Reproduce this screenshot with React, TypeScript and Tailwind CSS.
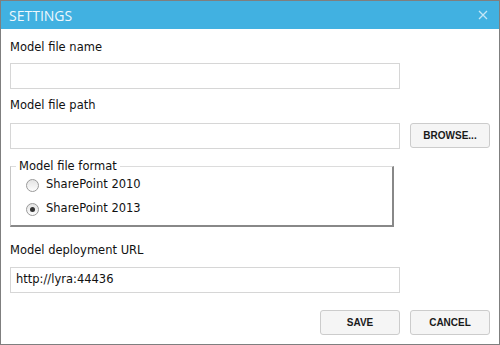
import React from 'react'

const font = { fontFamily: '"DejaVu Sans", Tahoma, sans-serif' }

function Field({ value = '' }: { value?: string }) {
  return (
    <div className="w-[390px] h-[26px] border border-[#d6d6d6] bg-white flex items-center px-[5px] text-[11.5px] text-[#111]">
      {value}
    </div>
  )
}

function Btn({ label }: { label: string }) {
  return (
    <div
      className="w-[80px] h-[25px] border border-[#cccccc] rounded-[3px] bg-[#f5f5f5] flex items-center justify-center text-[10px] font-bold text-[#1a1a1a]"
      style={{ fontFamily: '"Liberation Sans", Arial, sans-serif' }}
    >
      {label}
    </div>
  )
}

function Radio({ checked, label }: { checked?: boolean; label: string }) {
  return (
    <div className="flex items-center h-[16px] ml-[10px]">
      <span className="w-[13px] h-[13px] rounded-full border border-[#9a9a9a] bg-gradient-to-b from-[#e4e4e4] to-[#fdfdfd] flex items-center justify-center">
        {checked && <span className="w-[5px] h-[5px] rounded-full bg-[#333]" />}
      </span>
      <span className="ml-[7px] text-[11.5px] text-[#111]">{label}</span>
    </div>
  )
}

export default function App() {
  return (
    <div className="w-[500px] h-[345px] border border-[#7f7f7f] bg-white flex flex-col" style={font}>
      <div className="h-[28px] bg-[#41b1e1] flex items-center justify-between pl-[8px] pr-[11px]">
        <span className="text-[14px] text-[#eef8fd]" style={{ fontFamily: '"Open Sans", sans-serif' }}>
          SETTINGS
        </span>
        <svg width="10" height="10" viewBox="0 0 10 10" className="stroke-[#c4e6f6]">
          <path d="M1 1 L9 9 M9 1 L1 9" strokeWidth="1.3" fill="none" />
        </svg>
      </div>
      <div className="px-[9px] flex flex-col">
        <div className="mt-[10px] h-[16px] leading-[16px] text-[11.5px] text-[#111]">Model file name</div>
        <div className="mt-[8px]">
          <Field />
        </div>
        <div className="mt-[8px] h-[16px] leading-[16px] text-[11.5px] text-[#111]">Model file path</div>
        <div className="mt-[10px] flex gap-[10px]">
          <Field />
          <Btn label="BROWSE..." />
        </div>
        <fieldset className="mt-[10px] w-[384px] h-[68px] border-t border-t-[#dcdcdc] border-l border-l-[#c6c6c6] border-r-2 border-r-[#888888] border-b-2 border-b-[#888888] pl-[5px] pr-[8px] pt-[4px]">
          <legend className="px-[3px] text-[11.5px] leading-[14px] text-[#111]">Model file format</legend>
          <Radio label="SharePoint 2010" />
          <div className="mt-[8px]">
            <Radio checked label="SharePoint 2013" />
          </div>
        </fieldset>
        <div className="mt-[15px] h-[16px] leading-[16px] text-[11.5px] text-[#111]">Model deployment URL</div>
        <div className="mt-[9px]">
          <Field value="http://lyra:44436" />
        </div>
        <div className="mt-[17px] flex justify-end gap-[10px]">
          <Btn label="SAVE" />
          <Btn label="CANCEL" />
        </div>
      </div>
    </div>
  )
}
